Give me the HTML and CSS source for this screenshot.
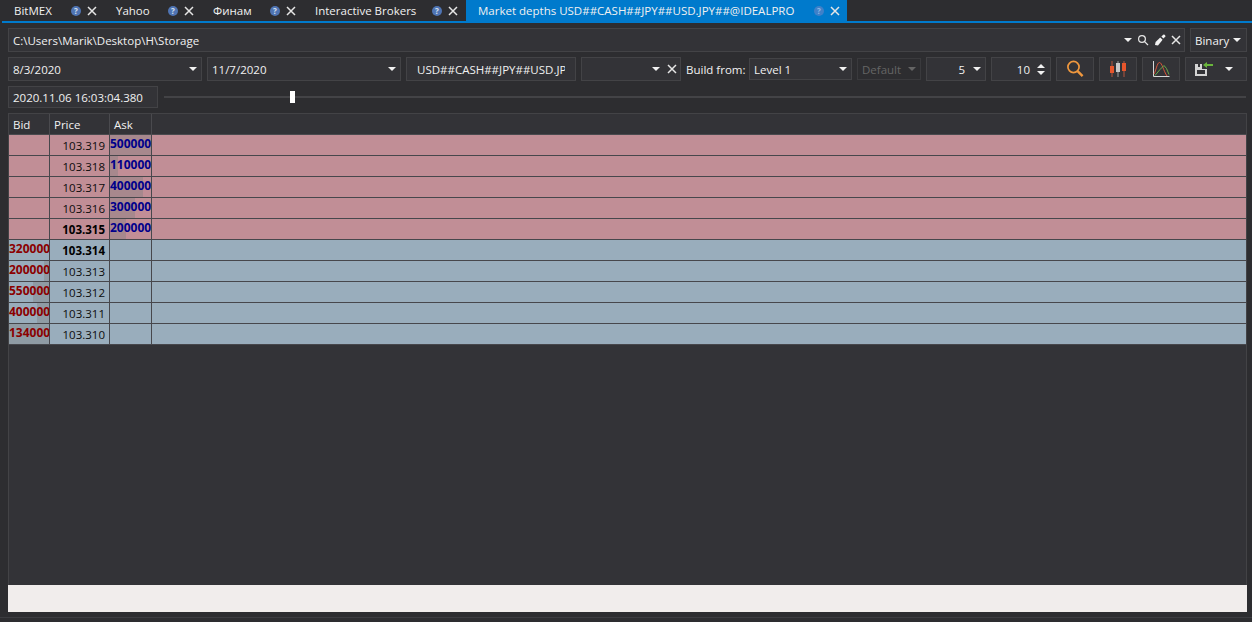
FILE: index.html
```html
<!DOCTYPE html>
<html lang="en">
<head>
  <meta charset="UTF-8">
  <title>Market depths</title>
  <link rel="stylesheet" href="styles.css">
</head>
<body>
  <div class="tabs">
    <div class="tab"><span class="tab-title">BitMEX</span><span class="help">?</span><svg class="close" viewBox="0 0 10 10"><path d="M1 1l8 8M9 1l-8 8"/></svg></div>
    <div class="tab"><span class="tab-title">Yahoo</span><span class="help">?</span><svg class="close" viewBox="0 0 10 10"><path d="M1 1l8 8M9 1l-8 8"/></svg></div>
    <div class="tab"><span class="tab-title">Финам</span><span class="help">?</span><svg class="close" viewBox="0 0 10 10"><path d="M1 1l8 8M9 1l-8 8"/></svg></div>
    <div class="tab"><span class="tab-title">Interactive Brokers</span><span class="help">?</span><svg class="close" viewBox="0 0 10 10"><path d="M1 1l8 8M9 1l-8 8"/></svg></div>
    <div class="tab active"><span class="tab-title">Market depths USD##CASH##JPY##USD.JPY##@IDEALPRO</span><span class="help">?</span><svg class="close" viewBox="0 0 10 10"><path d="M1 1l8 8M9 1l-8 8"/></svg></div>
  </div>

  <div class="content">
    <div class="row">
      <div class="field path">
        <span class="grow">C:\Users\Marik\Desktop\H\Storage</span>
        <i class="caret"></i>
        <svg class="mini" viewBox="0 0 12 12"><circle cx="5" cy="5" r="3.4"/><path d="M7.6 7.6l3.4 3.4"/></svg>
        <svg class="mini pen" viewBox="0 0 12 12"><path d="M1 11l.6-3 4.6-4.6 2.4 2.4L4 11.4z"/><path d="M7.4 2.6L9.2.8a1 1 0 0 1 1.4 0l.6.6a1 1 0 0 1 0 1.4L9.4 4.6z"/></svg>
        <svg class="close" viewBox="0 0 10 10"><path d="M1 1l8 8M9 1l-8 8"/></svg>
      </div>
      <div class="field binary"><span class="grow">Binary</span><i class="caret"></i></div>
    </div>

    <div class="row">
      <div class="field date"><span class="grow">8/3/2020</span><i class="caret"></i></div>
      <div class="field date"><span class="grow">11/7/2020</span><i class="caret"></i></div>
      <div class="field symbol"><span class="clip">USD##CASH##JPY##USD.JPY##@IDEALPRO</span></div>
      <div class="field portfolio"><span class="grow"></span><i class="caret"></i><svg class="close" viewBox="0 0 10 10"><path d="M1 1l8 8M9 1l-8 8"/></svg></div>
      <span class="label">Build from:</span>
      <div class="field level"><span class="grow">Level 1</span><i class="caret"></i></div>
      <div class="field format disabled"><span class="grow">Default</span><i class="caret"></i></div>
      <div class="field num"><span class="grow right">5</span><i class="caret"></i></div>
      <div class="field num"><span class="grow right">10</span>
        <span class="spin"><i class="caret up"></i><i class="caret"></i></span>
      </div>
      <button class="btn">
        <svg width="20" height="20" viewBox="0 0 20 20" fill="none" stroke="#f0983e"><circle cx="8.5" cy="8" r="5.6" stroke-width="1.7"/><path d="M12.6 12.2l5 5" stroke-width="2.4"/></svg>
      </button>
      <button class="btn">
        <svg width="18" height="18" viewBox="0 0 18 18" fill="none">
          <path d="M3 1v16M15 1v16" stroke="#b5563f"/>
          <path d="M9 1v16" stroke="#9a9a9a"/>
          <rect x="1" y="6" width="4" height="7" fill="#e8562c"/>
          <rect x="7" y="3" width="4" height="9" fill="#c8c8c8"/>
          <rect x="13" y="3" width="4" height="8" fill="#e8562c"/>
        </svg>
      </button>
      <button class="btn">
        <svg width="18" height="18" viewBox="0 0 18 18" fill="none">
          <path d="M1.5 1v15.5H17.500" stroke="#d8d8d8"/>
          <path d="M2 14C4 11 5 2.500 7.500 2.500S11.500 11 15 16" stroke="#d8553a"/>
          <path d="M3 15.500l5-6 4-4 2.500 3 2.500 6" stroke="#6aa84a"/>
        </svg>
      </button>
      <button class="btn save">
        <svg width="18" height="14" viewBox="0 0 18 14">
          <path d="M0 2h7v5h5v7H0z" fill="#d4d4d4"/>
          <rect x="3" y="2" width="2" height="3" fill="#333337"/>
          <rect x="2" y="8" width="8" height="4" fill="#333337"/>
          <path d="M8 3l4-3v2h6v2h-6v2z" fill="#6ab63c"/>
        </svg>
        <i class="caret"></i>
      </button>
    </div>

    <div class="row time-row">
      <div class="field stamp">2020.11.06 16:03:04.380</div>
      <div class="slider"><i class="thumb"></i></div>
    </div>

    <div class="grid-wrap">
      <table class="depth">
        <colgroup><col class="c-bid"><col class="c-price"><col class="c-ask"><col></colgroup>
        <thead>
          <tr><th>Bid</th><th>Price</th><th>Ask</th><th></th></tr>
        </thead>
        <tbody>
          <tr class="sell"><td></td><td class="price">103.319</td><td class="ask"><i class="bar" style="width:41px"></i><b>500000</b></td><td></td></tr>
          <tr class="sell"><td></td><td class="price">103.318</td><td class="ask"><i class="bar" style="width:8px"></i><b>110000</b></td><td></td></tr>
          <tr class="sell"><td></td><td class="price">103.317</td><td class="ask"><i class="bar" style="width:33px"></i><b>400000</b></td><td></td></tr>
          <tr class="sell"><td></td><td class="price">103.316</td><td class="ask"><i class="bar" style="width:25px"></i><b>300000</b></td><td></td></tr>
          <tr class="sell"><td></td><td class="price best">103.315</td><td class="ask"><i class="bar" style="width:16px"></i><b>200000</b></td><td></td></tr>
          <tr class="buy"><td class="bid"><b>320000</b></td><td class="price best">103.314</td><td></td><td></td></tr>
          <tr class="buy"><td class="bid"><i class="bar" style="width:5px"></i><b>200000</b></td><td class="price">103.313</td><td></td><td></td></tr>
          <tr class="buy"><td class="bid"><i class="bar" style="width:16px"></i><b>550000</b></td><td class="price">103.312</td><td></td><td></td></tr>
          <tr class="buy"><td class="bid"><i class="bar" style="width:12px"></i><b>400000</b></td><td class="price">103.311</td><td></td><td></td></tr>
          <tr class="buy"><td class="bid"><i class="bar" style="width:40px"></i><b>134000</b></td><td class="price">103.310</td><td></td><td></td></tr>
        </tbody>
      </table>
    </div>

    <div class="bottom-bar"></div>
  </div>
  <div class="status"></div>
</body>
</html>
```

FILE: styles.css
```css
* {
  box-sizing: border-box;
}
html, body {
  height: 100%;
}
body {
  margin: 0;
  display: flex;
  flex-direction: column;
  overflow: hidden;
  background: #2d2d30;
  color: #f1f1f1;
  font-family: "Open Sans", "Noto Sans", sans-serif;
  font-size: 11.5px;
}

/* tabs */
.tabs {
  display: grid;
  grid-template-columns: 103px 97px 102px 162px 381px;
  height: 23px;
  margin-left: 2px;
  border-bottom: 2px solid #007acc;
}
.tab {
  display: flex;
  align-items: center;
  gap: 6px;
  height: 21px;
  padding: 0 8px 0 11px;
}
.tab:first-child {
  padding-left: 12px;
}
.tab.active {
  height: 23px;
  padding: 0 7px 2px 12px;
  background: #007acc;
}
.tab-title {
  flex: 1;
  white-space: nowrap;
}
.help {
  width: 10px;
  height: 10px;
  border-radius: 50%;
  background: #4f74b3;
  color: #d7e0ee;
  font-size: 8px;
  font-weight: 700;
  line-height: 10px;
  text-align: center;
}
.tab.active .help {
  background: #3f80c8;
  color: #8db8e6;
}
.close {
  width: 10px;
  height: 10px;
  flex: none;
  fill: none;
  stroke: #e6e6e6;
  stroke-width: 1.5;
}

/* toolbar rows */
.content {
  flex: 1;
  display: flex;
  flex-direction: column;
  gap: 5px;
  padding: 5px 5px 0 8px;
}
.row {
  display: flex;
  align-items: center;
  gap: 5px;
  height: 24px;
  flex: none;
}
.row > * {
  flex: none;
}
.field {
  display: flex;
  align-items: center;
  height: 24px;
  padding: 0 4px;
  background: #333337;
  border: 1px solid #434346;
  white-space: nowrap;
}
.grow {
  flex: 1;
}
.right {
  text-align: right;
}
.caret {
  display: block;
  flex: none;
  width: 0;
  height: 0;
  border-left: 4px solid transparent;
  border-right: 4px solid transparent;
  border-top: 4px solid #f1f1f1;
}
.caret.up {
  border-top: 0;
  border-bottom: 4px solid #f1f1f1;
}
.row > .path {
  flex: 1;
  gap: 5px;
  padding-right: 3px;
}
.binary {
  width: 57px;
  padding-right: 5px;
}
.mini {
  width: 12px;
  height: 12px;
  flex: none;
  fill: none;
  stroke: #e6e6e6;
  stroke-width: 1.2;
}
.mini.pen {
  fill: #f1f1f1;
  stroke: none;
}
.date {
  width: 194px;
}
.symbol {
  width: 170px;
  padding: 0 10px;
}
.clip {
  display: block;
  overflow: hidden;
}
.portfolio {
  width: 100px;
  gap: 7px;
  padding-right: 3px;
}
.label {
  width: 58px;
  white-space: nowrap;
}
.level {
  width: 103px;
  height: 22px;
}
.format {
  width: 64px;
  height: 22px;
}
.disabled {
  color: #656565;
  background: #2d2d30;
  border-color: #3a3a3d;
}
.disabled .caret {
  border-top-color: #656565;
}
.num {
  width: 60px;
  gap: 8px;
}
.spin {
  display: flex;
  flex-direction: column;
  gap: 3px;
  margin-left: -1px;
  padding-right: 1px;
}
.btn {
  display: flex;
  align-items: center;
  justify-content: center;
  width: 38px;
  height: 24px;
  padding: 0;
  background: #333337;
  border: 1px solid #434346;
}
.btn.save {
  width: 62px;
  justify-content: flex-start;
  gap: 12px;
  padding-left: 9px;
}

/* time slider */
.time-row {
  height: 22px;
  gap: 6px;
}
.stamp {
  width: 150px;
  height: 22px;
}
.row > .slider {
  position: relative;
  flex: 1;
  height: 2px;
  margin-right: 1px;
  background: #434346;
}
.thumb {
  position: absolute;
  left: 126px;
  top: -5px;
  width: 5px;
  height: 12px;
  background: #fff;
}

/* depth table */
.grid-wrap {
  flex: 1;
  background: #333337;
  border: 1px solid #434346;
  border-bottom: 0;
}
.depth {
  width: 100%;
  table-layout: fixed;
  border-collapse: separate;
  border-spacing: 0;
}
.c-bid {
  width: 41px;
}
.c-price {
  width: 60px;
}
.c-ask {
  width: 42px;
}
.depth th {
  height: 21px;
  padding: 0 4px;
  font-weight: 400;
  text-align: left;
  border-right: 1px solid #4a4a4e;
  border-bottom: 1px solid #4a4a4e;
}
.depth th:last-child,
.depth td:last-child {
  border-right: 0;
}
.depth td {
  position: relative;
  height: 21px;
  padding: 0;
  color: #0c0c0c;
  border-right: 1px solid #47474c;
  border-bottom: 1px solid #47474c;
  overflow: hidden;
}
.sell td {
  background: #c18e96;
}
.buy td {
  background: #99adbc;
}
.depth .price {
  padding: 1px 4px 0 0;
  text-align: right;
}
.depth .best {
  font-weight: 700;
  color: #000;
}
.ask b,
.bid b {
  position: relative;
  display: block;
  font-size: 12px;
  line-height: 15px;
  margin-bottom: 4px;
  white-space: nowrap;
}
.ask b {
  color: #00008b;
}
.bid b {
  color: #8b0000;
  text-align: right;
}
.bar {
  position: absolute;
  top: 0;
  bottom: 0;
  left: 0;
  background: rgba(128, 128, 128, 0.4);
}
.bid .bar {
  left: auto;
  right: 0;
}

.bottom-bar {
  flex: none;
  height: 27px;
  margin-top: -5px;
  background: #f1edec;
}
.status {
  flex: none;
  height: 10px;
  padding-top: 5px;
}
.status::after {
  content: "";
  display: block;
  height: 1px;
  background: #3c3c40;
}
```
